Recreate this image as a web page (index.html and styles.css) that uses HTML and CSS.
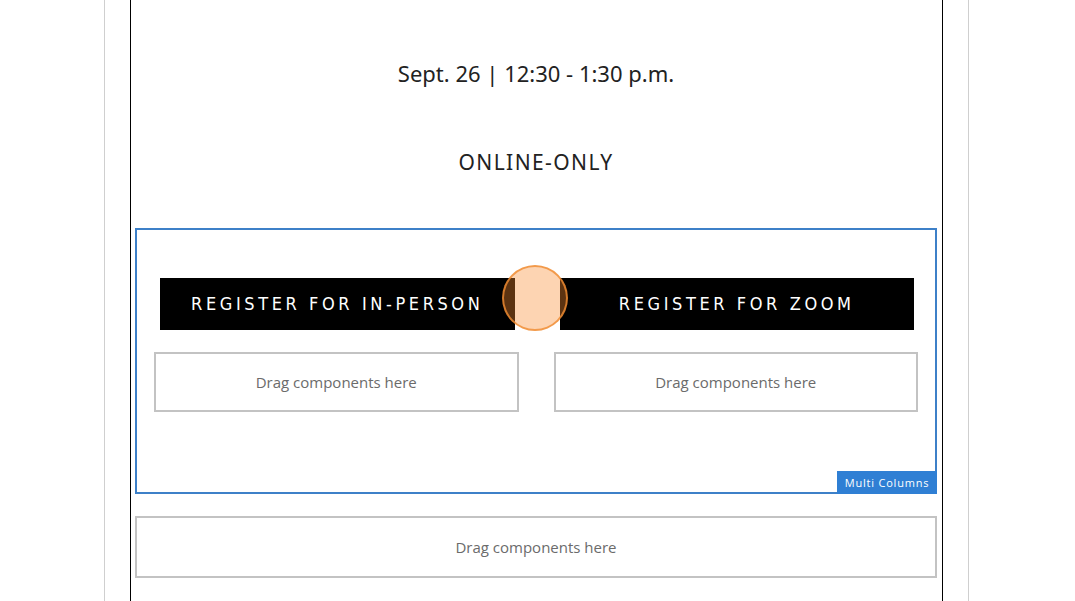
FILE: index.html
```html
<!DOCTYPE html>
<html lang="en">
<head>
    <meta charset="UTF-8">
    <meta name="viewport" content="width=device-width, initial-scale=1.0">
    <title>Event editor</title>
    <link rel="stylesheet" href="styles.css">
</head>
<body>
    <div class="page">
        <div class="content">
            <p class="event-date">Sept. 26 | 12:30 - 1:30 p.m.</p>
            <p class="event-mode">ONLINE-ONLY</p>

            <div class="multi-columns">
                <div class="column">
                    <a class="register-button" href="#">REGISTER FOR IN-PERSON</a>
                    <div class="dropzone">Drag components here</div>
                </div>
                <div class="column">
                    <a class="register-button" href="#">REGISTER FOR ZOOM</a>
                    <div class="dropzone">Drag components here</div>
                </div>
                <span class="component-label">Multi Columns</span>
                <span class="click-marker"></span>
            </div>

            <div class="dropzone dropzone-wide">Drag components here</div>
        </div>
    </div>
</body>
</html>
```

FILE: styles.css
```css
* {
    box-sizing: border-box;
}

body {
    margin: 0;
    background-color: #fff;
    font-family: "Open Sans", Arial, sans-serif;
    height: 601px;
    overflow: hidden;
}

.page {
    width: 865px;
    height: 601px;
    margin-left: 104px;
    padding: 0 25px;
    border-left: 1px solid #cfcfcf;
    border-right: 1px solid #cfcfcf;
}

.content {
    height: 100%;
    border-left: 1px solid #000;
    border-right: 1px solid #000;
    padding: 0 5px 0 4px;
}

.event-date {
    margin: 0;
    padding-top: 58px;
    height: 88px;
    line-height: 30px;
    text-align: center;
    font-family: "Noto Sans", Arial, sans-serif;
    font-size: 22px;
    color: #222;
}

.event-mode {
    margin: 0;
    padding-top: 59px;
    height: 89px;
    line-height: 30px;
    text-align: center;
    font-family: "Noto Sans", Arial, sans-serif;
    font-size: 21px;
    letter-spacing: 1.4px;
    color: #222;
}

.multi-columns {
    position: relative;
    margin-top: 51px;
    height: 266px;
    border: 2px solid #3d80c8;
    padding: 48px 17px 0;
    display: flex;
    gap: 35px;
}

.column {
    flex: 1;
    display: flex;
    flex-direction: column;
    gap: 22px;
}

.register-button {
    display: block;
    height: 52px;
    line-height: 52px;
    margin: 0 4px 0 6px;
    background-color: #000;
    color: #fff;
    text-align: center;
    text-decoration: none;
    font-family: "DejaVu Sans", sans-serif;
    font-stretch: condensed;
    font-size: 18px;
    letter-spacing: 3.6px;
}

.dropzone {
    height: 60px;
    line-height: 56px;
    border: 2px solid #c3c3c3;
    text-align: center;
    color: #6b6b6b;
    font-size: 15px;
}

.dropzone-wide {
    margin-top: 22px;
    height: 62px;
    line-height: 58px;
}

.component-label {
    position: absolute;
    right: -2px;
    bottom: -2px;
    width: 100px;
    height: 23px;
    line-height: 23px;
    background-color: #2f7fd4;
    color: #fff;
    font-size: 11px;
    letter-spacing: 0.8px;
    text-align: center;
}

.click-marker {
    position: absolute;
    left: 365px;
    top: 35px;
    width: 66px;
    height: 66px;
    border-radius: 50%;
    border: 2px solid rgba(240, 140, 50, 0.8);
    background-color: rgba(249, 138, 46, 0.37);
}
```
